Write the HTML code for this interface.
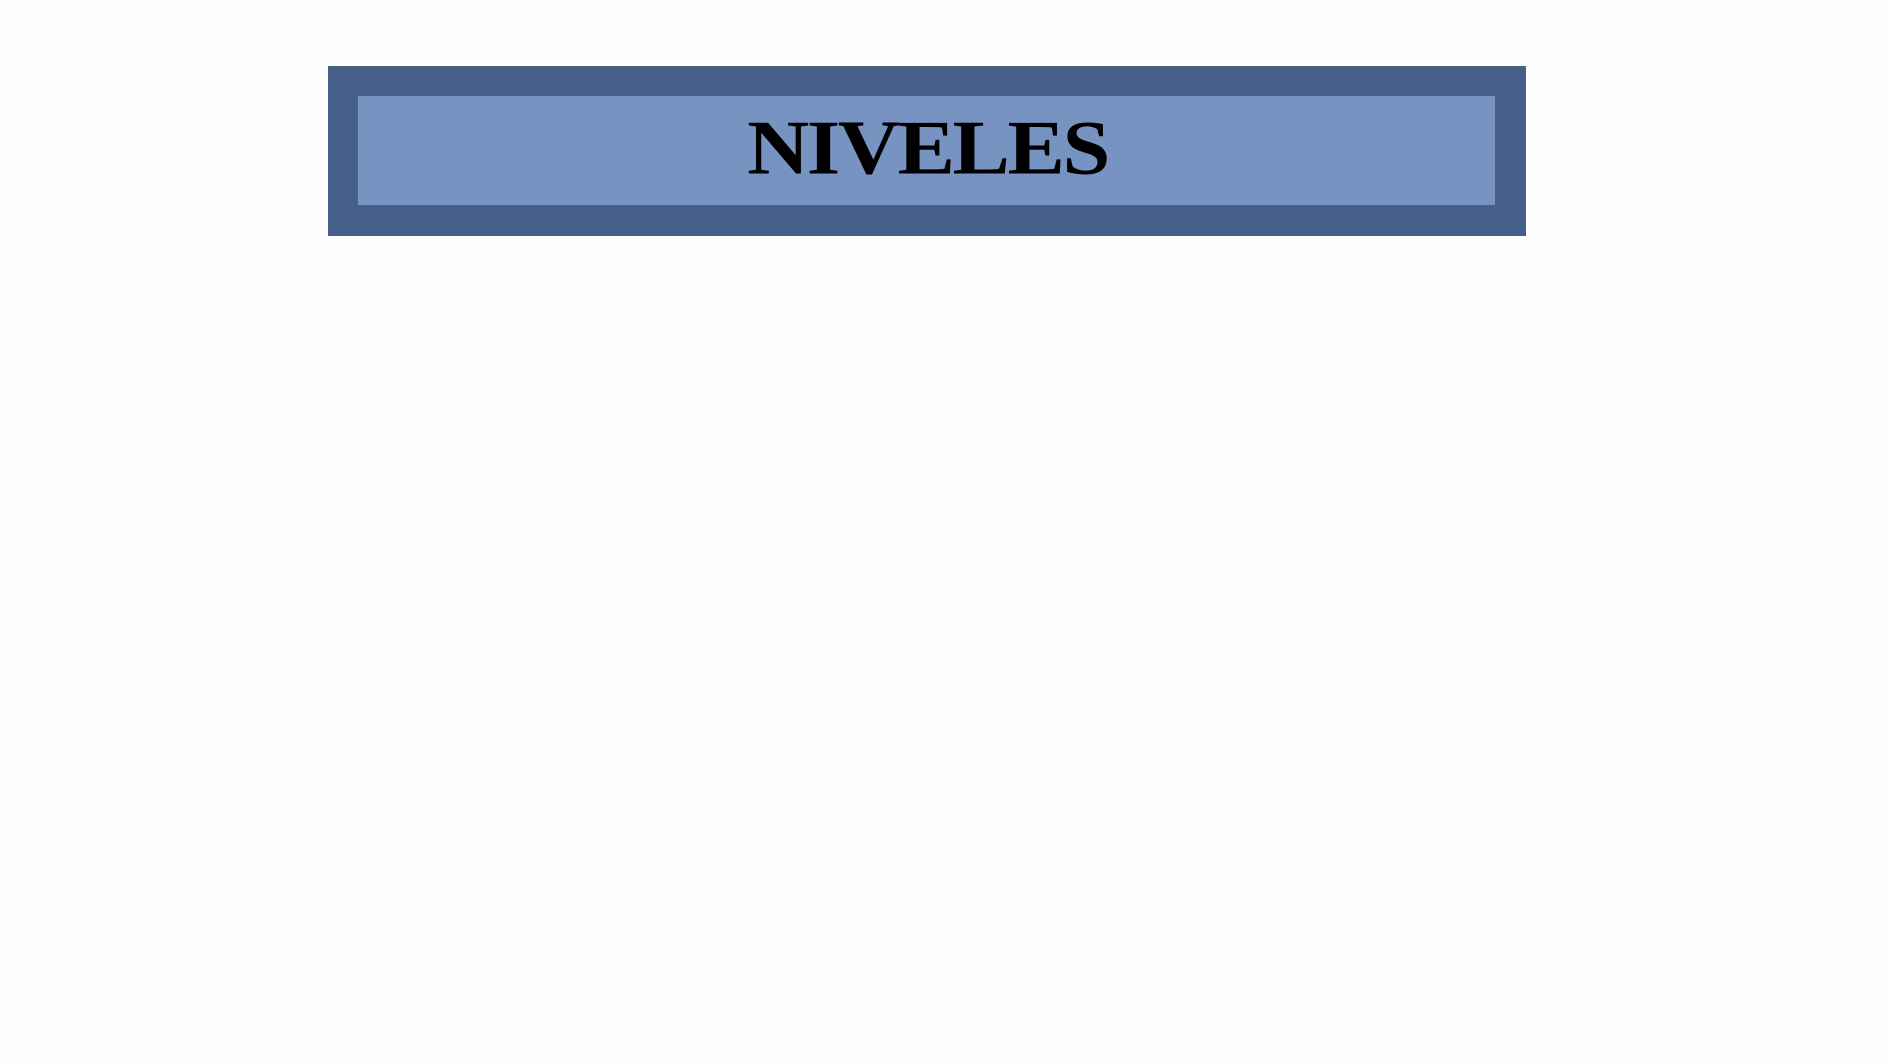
<!DOCTYPE html>
<html><head><meta charset="utf-8"><style>
html,body{margin:0;padding:0;background:#fefefe;width:1890px;height:1063px;overflow:hidden}
.outer{position:absolute;left:328px;top:66px;width:1198px;height:170px;background:#465f88}
.inner{position:absolute;left:358px;top:96px;width:1137px;height:109px;background:#7793c2}
.t{position:absolute;left:747px;top:111px;width:361px;text-align:center;font-family:"Liberation Serif",serif;font-weight:bold;font-size:70px;line-height:70px;color:#000;transform:scale(1.23,1.1);transform-origin:center top;letter-spacing:-2px;white-space:nowrap}
</style></head><body>
<div class="outer"></div><div class="inner"></div>
<div class="t">NIVELES</div>
</body></html>
